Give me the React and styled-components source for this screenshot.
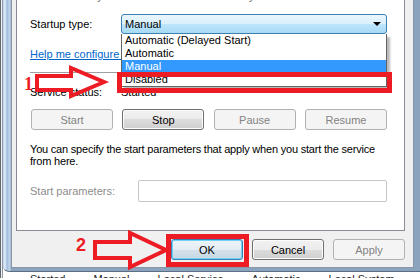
import React from 'react'
import styled, {createGlobalStyle} from 'styled-components'

const GlobalStyle = createGlobalStyle`
  html, body { margin:0; padding:0; }
  body {
    font-family: "Liberation Sans", Arial, sans-serif;
    font-size: 11px;
    color: #000;
  }
`

const Screen = styled.div`
  position: relative;
  width: 420px;
  height: 278px;
  overflow: hidden;
  display: flex;
  flex-direction: column;
  background: linear-gradient(90deg, #5f6670 0 1px, #f4f4f4 1px 2px, #8d98a6 2px 3px, #fff 3px);
`

const Window = styled.div`
  flex: none;
  width: 421px;
  margin-left: 3px;
  padding: 0 10px 3px 8px;
  box-sizing: border-box;
  background: linear-gradient(90deg, #b9cfe7 0, #e4eef9 2px, #9fbcdc 4px, #c6d9ee 7px, #8ca3bd 8px);
  border-bottom: 1px solid #5d6f86;
  border-bottom-left-radius: 6px;
`

const Inner = styled.div`
  width: 403px;
  box-sizing: border-box;
  background: #f0f0f0;
  border: 1px solid #8a97a8;
  border-top: none;
  padding: 0 8px 0 4px;
`

const Panel = styled.div`
  width: 389px;
  box-sizing: border-box;
  background: #fff;
  border: 1px solid #898c95;
  border-top: none;
  padding: 0 17px 28px 13px;
  display: flex;
  flex-direction: column;
`

const PathText = styled.div`
  margin-top: -10px;
  line-height: 13px;
  height: 13px;
  white-space: nowrap;
  color: #6d6d6d;
`

const Row = styled.div`
  display: flex;
  align-items: center;
  margin-top: ${p => p.$mt || 0}px;
  height: ${p => p.$h || 13}px;
  line-height: 13px;
`

const Label = styled.span`
  flex: none;
  width: ${p => p.$w || 91}px;
  color: ${p => p.$dim ? '#8d8d8d' : '#000'};
  white-space: nowrap;
`

const ComboWrap = styled.div`
  position: relative;
  flex: none;
  width: 266px;
  height: 20px;
`

const Combo = styled.div`
  height: 20px;
  box-sizing: border-box;
  border: 1px solid #3c7fb1;
  border-radius: 3px;
  background: linear-gradient(#eaf6fd 0, #d9f0fc 50%, #bee6fd 50%, #a7d9f5 100%);
  display: flex;
  align-items: center;
  justify-content: space-between;
  padding: 0 5px 0 3px;
`

const Caret = styled.span`
  width: 0;
  height: 0;
  border-left: 4px solid transparent;
  border-right: 4px solid transparent;
  border-top: 4px solid #000;
`

const List = styled.div`
  position: absolute;
  top: 100%;
  left: 0;
  width: 266px;
  box-sizing: border-box;
  border: 1px solid #646464;
  border-top: none;
  background: #fff;
  box-shadow: 3px 3px 2px rgba(0,0,0,0.28);
  z-index: 2;
`

const Item = styled.div`
  height: 13px;
  line-height: 13px;
  padding-left: 3px;
  background: ${p => p.$sel ? '#3399ff' : '#fff'};
  color: ${p => p.$sel ? '#fff' : '#000'};
`

const Link = styled.a`
  margin-top: 14px;
  line-height: 13px;
  color: #0066cc;
  text-decoration: underline;
  white-space: nowrap;
`

const Separator = styled.div`
  margin-top: 11px;
  height: 1px;
  background: #a0a0a0;
  border-bottom: 1px solid #fff;
`

const ButtonRow = styled.div`
  display: flex;
  justify-content: ${p => p.$end ? 'flex-end' : 'space-between'};
  gap: ${p => p.$gap || 0}px;
  margin-top: ${p => p.$mt || 0}px;
  margin-left: ${p => p.$ml || 0}px;
`

const Button = styled.div`
  flex: none;
  width: ${p => p.$w || 82}px;
  height: 21px;
  box-sizing: border-box;
  border-radius: 3px;
  display: flex;
  align-items: center;
  justify-content: center;
  border: 1px solid ${p => p.$off ? '#adb2b5' : p.$def ? '#3c7fb1' : '#707070'};
  color: ${p => p.$off ? '#838383' : '#000'};
  background: ${p => p.$off
    ? '#f4f4f4'
    : p.$def
      ? 'linear-gradient(#eef4f8 0, #e4edf3 50%, #d4e2ec 50%, #c8d9e5 100%)'
      : 'linear-gradient(#f2f2f2 0, #ebebeb 50%, #dddddd 50%, #cfcfcf 100%)'};
  box-shadow: ${p => p.$off ? 'none' : p.$def ? 'inset 0 0 0 1px #6fd2f7' : 'inset 0 0 0 1px #fcfcfc'};
`

const Desc = styled.p`
  margin: 13px 0 0;
  line-height: 12px;
  letter-spacing: -0.2px;
  white-space: nowrap;
`

const TextBox = styled.div`
  flex: none;
  width: 249px;
  height: 22px;
  box-sizing: border-box;
  border: 1px solid #c3c7ca;
  border-radius: 2px;
  background: #fff;
`

const ButtonBar = styled.div`
  padding: 8px 0 7px;
`

const Backdrop = styled.div`
  flex: none;
  display: flex;
  gap: 28px;
  padding: 1px 0 0 30px;
  line-height: 13px;
  color: #1d1d1d;
  white-space: nowrap;
`

const RedBox = styled.div`
  position: absolute;
  left: ${p => p.$x}px;
  top: ${p => p.$y}px;
  width: ${p => p.$w}px;
  height: ${p => p.$h}px;
  box-sizing: border-box;
  border: 5px solid #ed1c24;
  z-index: 3;
`

const Arrow = styled.svg`
  position: absolute;
  left: ${p => p.$x}px;
  top: ${p => p.$y}px;
  z-index: 3;
  overflow: visible;
`

const Num = styled.span`
  position: absolute;
  left: ${p => p.$x}px;
  top: ${p => p.$y}px;
  color: #ed1c24;
  font-weight: bold;
  font-size: 18px;
  line-height: 18px;
  font-family: ${p => p.$serif ? '"Liberation Serif", serif' : '"Liberation Sans", sans-serif'};
  z-index: 3;
`

const options = ['Automatic (Delayed Start)', 'Automatic', 'Manual', 'Disabled']

export default function App() {
  return (
    <>
      <GlobalStyle />
      <Screen>
        <Window>
          <Inner>
            <Panel>
              <PathText>C:\Windows\system32\svchost.exe -k LocalSystemNetworkRestricted</PathText>
              <Row $mt={11} $h={20}>
                <Label>Startup type:</Label>
                <ComboWrap>
                  <Combo>
                    <span>Manual</span>
                    <Caret />
                  </Combo>
                  <List>
                    {options.map(o => (
                      <Item key={o} $sel={o === 'Manual'}>{o}</Item>
                    ))}
                  </List>
                </ComboWrap>
              </Row>
              <Link>Help me configure service startup options.</Link>
              <Separator />
              <Row $mt={12}>
                <Label>Service status:</Label>
                <span>Started</span>
              </Row>
              <ButtonRow $mt={10} $ml={1}>
                <Button $off>Start</Button>
                <Button>Stop</Button>
                <Button $off>Pause</Button>
                <Button $off>Resume</Button>
              </ButtonRow>
              <Desc>
                You can specify the start parameters that apply when you start the service
                <br />
                from here.
              </Desc>
              <Row $mt={13} $h={22}>
                <Label $dim $w={108}>Start parameters:</Label>
                <TextBox />
              </Row>
            </Panel>
            <ButtonBar>
              <ButtonRow $end $gap={9}>
                <Button $def $w={72}>OK</Button>
                <Button $w={72}>Cancel</Button>
                <Button $off $w={72}>Apply</Button>
              </ButtonRow>
            </ButtonBar>
          </Inner>
        </Window>
        <Backdrop>
          <span>Started</span>
          <span>Manual</span>
          <span>Local Service</span>
          <span>Automatic</span>
          <span>Local System</span>
        </Backdrop>

        <RedBox $x={117} $y={72} $w={275} $h={21} />
        <Num $serif $x={24} $y={75}>1</Num>
        <Arrow $x={33} $y={65} width="76" height="36" viewBox="0 0 76 36">
          <polygon points="4,11 38,11 38,3 71,17 38,31 38,25 4,25" fill="none" stroke="#ed1c24" strokeWidth="4" />
        </Arrow>

        <RedBox $x={166} $y={234} $w={83} $h={33} />
        <Num $x={76} $y={236}>2</Num>
        <Arrow $x={91} $y={229} width="80" height="42" viewBox="0 0 80 42">
          <polygon points="4,13 39,13 39,4 75,21 39,38 39,29 4,29" fill="none" stroke="#ed1c24" strokeWidth="4" />
        </Arrow>
      </Screen>
    </>
  )
}
